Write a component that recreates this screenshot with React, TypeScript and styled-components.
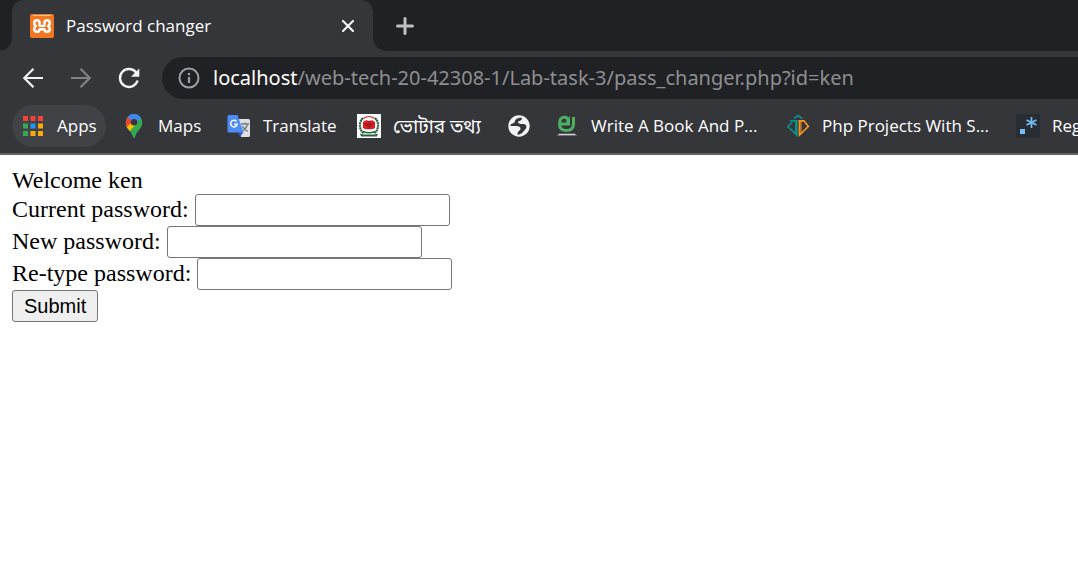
import React from 'react';
import styled, { createGlobalStyle } from 'styled-components';

const GlobalStyle = createGlobalStyle`
  *, *::before, *::after { box-sizing: border-box; }
  body { margin: 0; background: #fff; }
  #root { min-height: 100vh; }
`;

const ui = `'Open Sans', 'Noto Sans', 'Noto Sans Bengali', sans-serif`;

const Chrome = styled.header`
  background: #35363a;
  color: #fff;
  font-family: ${ui};
  border-bottom: 2px solid #606165;
  overflow: hidden;
`;

const TabStrip = styled.div`
  display: flex;
  align-items: center;
  height: 51px;
  padding-left: 12px;
  background: #202124;
`;

const Tab = styled.div`
  position: relative;
  display: flex;
  align-items: center;
  gap: 12px;
  width: 361px;
  height: 100%;
  padding: 0 16px 0 18px;
  background: #35363a;
  border-radius: 12px 12px 0 0;

  &::before, &::after {
    content: '';
    position: absolute;
    bottom: 0;
    width: 12px;
    height: 12px;
  }
  &::before {
    right: 100%;
    background: radial-gradient(circle at 0 0, #202124 11px, #35363a 12px);
  }
  &::after {
    left: 100%;
    background: radial-gradient(circle at 100% 0, #202124 11px, #35363a 12px);
  }
`;

const TabTitle = styled.span`
  flex: 1;
  font-size: 17px;
  line-height: 24px;
  white-space: nowrap;
`;

const IconButton = styled.button<{ $tone?: string }>`
  display: flex;
  padding: 0;
  border: 0;
  background: none;
  color: ${p => p.$tone ?? '#f1f3f4'};

  svg { display: block; }
`;

const NewTab = styled(IconButton)`
  margin-left: 20px;
`;

const Toolbar = styled.div`
  display: flex;
  align-items: center;
  gap: 24px;
  padding: 6px 0 6px 21px;
`;

const AddressBar = styled.div`
  display: flex;
  flex: 1;
  align-items: center;
  gap: 12px;
  height: 42px;
  margin: 0 -24px 0 -3px;
  padding-left: 15px;
  border-radius: 21px 0 0 21px;
  background: #202124;
`;

const Address = styled.div`
  flex: 1;
  color: #8e8f92;
  font-family: 'Noto Sans', sans-serif;
  font-size: 20px;
  line-height: 28px;
  white-space: nowrap;
  outline: none;
`;

const Host = styled.span`
  color: #fff;
`;

const Bookmarks = styled.nav`
  display: flex;
  gap: 7px;
  padding: 0 0 6px 12px;
`;

const Bookmark = styled.a<{ $width: number; $active?: boolean; $size?: number }>`
  display: flex;
  flex: none;
  align-items: center;
  gap: 12px;
  width: ${p => p.$width}px;
  height: 42px;
  padding-left: 9px;
  border-radius: 21px;
  background: ${p => (p.$active ? '#414246' : 'transparent')};
  color: #fff;
  font-size: ${p => p.$size ?? 17}px;
  line-height: 24px;
  text-decoration: none;
  white-space: nowrap;

  svg { flex: none; }
`;

const Page = styled.main`
  padding: 12px;
  color: #000;
  font-family: 'Liberation Serif', serif;
  font-size: 24px;
  line-height: 27px;
`;

const Row = styled.div`
  display: flex;
  gap: 6px;
  height: 32px;
  line-height: 30px;
`;

const Field = styled.input`
  width: 255px;
  height: 32px;
  padding: 2px 4px;
  border: 1px solid #767676;
  border-radius: 3px;
  background: #fff;
  font: 20px 'Liberation Sans', sans-serif;
`;

const Submit = styled.button`
  height: 32px;
  padding: 0 11px;
  border: 1px solid #767676;
  border-radius: 3px;
  background: #efefef;
  color: #000;
  font: 20px 'Liberation Sans', sans-serif;
`;

const Xampp = () => (
  <svg width="24" height="24" viewBox="0 0 24 24" aria-hidden="true">
    <rect width="24" height="24" rx="2" fill="#f37623" />
    <path d="M3 1.5h18" stroke="#ffc79a" strokeWidth="1" />
    <path
      d="M9.500 8.300C9.200 6.700 8.200 6.200 7 6.200 5.200 6.200 4.200 7.700 4.200 9.200c0 1.400.7 2.200 1.800 2.800-1.100.6-1.800 1.400-1.800 2.800 0 1.500 1 3 2.800 3 1.700 0 2.500-1.200 2.700-2.600h4.600c.2 1.400 1 2.600 2.700 2.600 1.800 0 2.800-1.500 2.800-3 0-1.400-.7-2.200-1.800-2.800 1.100-.6 1.800-1.400 1.800-2.800 0-1.500-1-3-2.800-3-1.200 0-2.200.5-2.500 2.100"
      fill="none" stroke="#fff" strokeWidth="2.500" strokeLinejoin="round" strokeLinecap="round"
    />
    <path d="M9.500 8.500v3.300h5V8.500" fill="none" stroke="#fff" strokeWidth="2.200" strokeLinejoin="round" />
  </svg>
);

const AppsIcon = () => {
  const colors = ['#f44336', '#f44336', '#f44336', '#34a853', '#2196f3', '#fbab09', '#34a853', '#fbab09', '#fbab09'];
  return (
    <svg width="24" height="24" viewBox="0 0 24 24" aria-hidden="true">
      {colors.map((c, i) => (
        <rect key={i} x={2 + (i % 3) * 7.5} y={2 + Math.floor(i / 3) * 7.5} width="5" height="5" fill={c} />
      ))}
    </svg>
  );
};

const MapsIcon = () => (
  <svg width="24" height="24" viewBox="0 0 24 24" aria-hidden="true">
    <defs>
      <clipPath id="pin">
        <path d="M12 0a8.300 8.300 0 0 0-8.300 8.300c0 5 3.300 7.200 5.600 10.700 1.500 2.300 1.500 5 2.700 5s1.200-2.700 2.700-5c2.300-3.500 5.600-5.700 5.600-10.700A8.300 8.300 0 0 0 12 0Z" />
      </clipPath>
    </defs>
    <g clipPath="url(#pin)">
      <rect width="24" height="24" fill="#34a853" />
      <path d="M3.500 11 9 8.500 14 10.500 6.500 18 3 16Z" fill="#fbbc04" />
      <path d="M5.500 2.500 12 8 4.500 14 1 8Z" fill="#ea4335" />
      <path d="M3.500 14.500 9.500 8.500 12 11.500 7 18Z" fill="#fbbc04" />
      <path d="M5.600 2.800 9.500 6.500 12 9 19.500 4.500 19 0H7Z" fill="#4285f4" />
    </g>
    <circle cx="12" cy="8.300" r="3.200" fill="#35363a" />
  </svg>
);

const TranslateIcon = () => (
  <svg width="24" height="24" viewBox="0 0 24 24" aria-hidden="true">
    <path d="M9 5h12.500a1.500 1.500 0 0 1 1.500 1.500v15a1.500 1.500 0 0 1-1.500 1.500H14Z" fill="#dfe0e2" />
    <path d="M14 10h8M18 8.500V10M20.500 10c-.7 3.500-3 6-6 7.500M15.500 12c1 2.500 3 4.500 5.500 5.500" fill="none" stroke="#6f7f86" strokeWidth="1.300" />
    <path d="m11 18 5.500 0-3.500 5Z" fill="#3650b8" />
    <path d="M2 1h8.500L16.500 18.500H2A1.500 1.500 0 0 1 .5 17V2.500A1.500 1.500 0 0 1 2 1Z" fill="#4d8bf5" />
    <path d="M9.500 7.500a3.300 3.300 0 1 0 .7 2.700H7.200" fill="none" stroke="#fff" strokeWidth="1.500" />
  </svg>
);

const VoterIcon = () => (
  <svg width="24" height="24" viewBox="0 0 24 24" aria-hidden="true">
    <rect width="24" height="24" fill="#fff" />
    <path d="M6 4C1.500 8 2 16 7 19.500M18 4C22.500 8 22 16 17 19.500" fill="none" stroke="#285f3d" strokeWidth="2.200" strokeDasharray="2 .5" />
    <path d="M6.500 4.500a9 9 0 0 1 11 0" fill="none" stroke="#d92525" strokeWidth="1.300" />
    <path d="M6 8q3-3 6-1 3-2 6 1v6q-3 2-6 1-3 1-6-1Z" fill="#e31b23" />
    <path d="M12 7v8M7.500 10h3v2.500M16.500 10h-3v2.500" fill="none" stroke="#731c20" strokeWidth="1" />
    <path d="M6 17.500q6 2.500 12 0" fill="none" stroke="#285f3d" strokeWidth="1.500" />
    <path d="M3 19.500 6 20.500h12l3-1-1 3H4Z" fill="#285f3d" />
  </svg>
);

const GlobeIcon = () => (
  <svg width="24" height="24" viewBox="0 0 24 24" aria-hidden="true">
    <circle cx="12" cy="12" r="10.700" fill="#f1f3f4" />
    <path d="M14.500 3.500C10 4 8 5.500 7.500 8.500 6.500 9.500 3.500 9.500 3.300 12c2.700.2 5.700-.5 7.700.3s2.500 1 2.500 2.700-2 1.500-2.500 3-.5 2-.5 2.700c2.500-.2 4.500-1.200 5.500-2.700s2.500-2.300 3.300-4.500-1.300-3.500-3.300-3.500-3 .3-4.500-1 .5-2 2-2.500 1.500-1.500 1-3Z" fill="#35363a" />
  </svg>
);

const BookIcon = () => (
  <svg width="24" height="24" viewBox="0 0 24 24" aria-hidden="true">
    <path d="M5 10H13V6.500C13 3.800 11.300 3.300 9.500 3.300 6 3.300 4.500 6 4.500 10S6.500 16.500 11.500 16.500 18.500 14 18.500 9.500V3" fill="none" stroke="#4caf61" strokeWidth="3" />
    <path d="M14.500 2.500V11" stroke="#4caf61" strokeWidth="1" />
    <path d="M3.500 20.500h17" stroke="#d6d3da" strokeWidth="1.500" />
    <path d="M2 21.500h20" stroke="#77727d" strokeWidth=".8" />
  </svg>
);

const ProjectsIcon = () => (
  <svg width="24" height="24" viewBox="0 0 24 24" aria-hidden="true" fill="none">
    <path d="M8 4.500 12 1.500 16 4.500" stroke="#0b8f8a" strokeWidth="1.700" />
    <path d="M4 6.800h6.800V21L1.800 12.500 6 8.500" stroke="#0b8f8a" strokeWidth="1.700" />
    <path d="M9.500 7v12" stroke="#0b8f8a" strokeWidth="1" />
    <path d="M12.500 6.800H18l4.300 5.700L13.500 21V7" stroke="#f7941e" strokeWidth="1.700" />
    <path d="M15 7v12" stroke="#f7941e" strokeWidth="1" />
  </svg>
);

const RegexIcon = () => (
  <svg width="24" height="24" viewBox="0 0 24 24" aria-hidden="true">
    <rect width="24" height="24" fill="#282d33" />
    <rect x="4" y="15" width="5" height="5" fill="#75bdf5" />
    <path d="M15.500 3v11M10.500 6l10 5M20.500 6l-10 5" stroke="#75bdf5" strokeWidth="1.700" />
  </svg>
);

const bookmarks = [
  { label: 'Apps', icon: <AppsIcon />, width: 94, active: true },
  { label: 'Maps', icon: <MapsIcon />, width: 98 },
  { label: 'Translate', icon: <TranslateIcon />, width: 123 },
  { label: 'ভোটার তথ্য', icon: <VoterIcon />, width: 143, size: 19 },
  { label: '', icon: <GlobeIcon />, width: 41 },
  { label: 'Write A Book And P...', icon: <BookIcon />, width: 224 },
  { label: 'Php Projects With S...', icon: <ProjectsIcon />, width: 223 },
  { label: 'Regex', icon: <RegexIcon />, width: 100 },
];

const fields = [
  { id: 'current', label: 'Current password:' },
  { id: 'new', label: 'New password:' },
  { id: 'retype', label: 'Re-type password:' },
];

export default function App() {
  return (
    <>
      <GlobalStyle />
      <Chrome>
        <TabStrip>
          <Tab>
            <Xampp />
            <TabTitle>Password changer</TabTitle>
            <IconButton aria-label="Close tab">
              <svg width="18" height="18" viewBox="0 0 18 18" stroke="currentColor" strokeWidth="2.200" strokeLinecap="round">
                <path d="m4 4 10 10M14 4 4 14" />
              </svg>
            </IconButton>
          </Tab>
          <NewTab aria-label="New tab" $tone="#bdc1c4">
            <svg width="24" height="24" viewBox="0 0 24 24" stroke="currentColor" strokeWidth="3" strokeLinecap="round">
              <path d="M12 4.500v15M4.500 12h15" />
            </svg>
          </NewTab>
        </TabStrip>
        <Toolbar>
          <IconButton aria-label="Back">
            <svg width="24" height="24" viewBox="0 0 24 24" fill="none" stroke="currentColor" strokeWidth="2.200">
              <path d="M22 12H4M12.500 2.800 3.300 12l9.200 9.200" />
            </svg>
          </IconButton>
          <IconButton aria-label="Forward" $tone="#818286">
            <svg width="24" height="24" viewBox="0 0 24 24" fill="none" stroke="currentColor" strokeWidth="2.200">
              <path d="M2 12h18M11.500 2.800l9.200 9.200-9.200 9.200" />
            </svg>
          </IconButton>
          <IconButton aria-label="Reload">
            <svg width="24" height="24" viewBox="0 0 24 24" fill="none" stroke="currentColor" strokeWidth="2.400">
              <path d="M19.500 7A9 9 0 1 0 20.600 14.500" />
              <path d="M22.300 2.500v8.300H14Z" fill="currentColor" stroke="none" />
            </svg>
          </IconButton>
          <AddressBar>
            <IconButton aria-label="View site information" $tone="#9aa0a6">
              <svg width="24" height="24" viewBox="0 0 24 24" fill="none" stroke="currentColor" strokeWidth="2">
                <circle cx="12" cy="12" r="9.500" />
                <path d="M12 11v6M12 7v2.200" strokeWidth="2.200" />
              </svg>
            </IconButton>
            <Address role="textbox" aria-label="Address" tabIndex={0}>
              <Host>localhost</Host>/web-tech-20-42308-1/Lab-task-3/pass_changer.php?id=ken
            </Address>
          </AddressBar>
        </Toolbar>
        <Bookmarks aria-label="Bookmarks">
          {bookmarks.map(b => (
            <Bookmark
              key={b.label}
              href="#"
              $width={b.width}
              $active={b.active}
              $size={b.size}
              aria-label={b.label || 'Website'}
            >
              {b.icon}
              {b.label && <span>{b.label}</span>}
            </Bookmark>
          ))}
        </Bookmarks>
      </Chrome>
      <Page>
        <div>Welcome ken</div>
        <form onSubmit={e => e.preventDefault()}>
          {fields.map(f => (
            <Row key={f.id}>
              <label htmlFor={f.id}>{f.label}</label>
              <Field id={f.id} name={f.id} type="password" />
            </Row>
          ))}
          <Row>
            <Submit type="submit">Submit</Submit>
          </Row>
        </form>
      </Page>
    </>
  );
}
